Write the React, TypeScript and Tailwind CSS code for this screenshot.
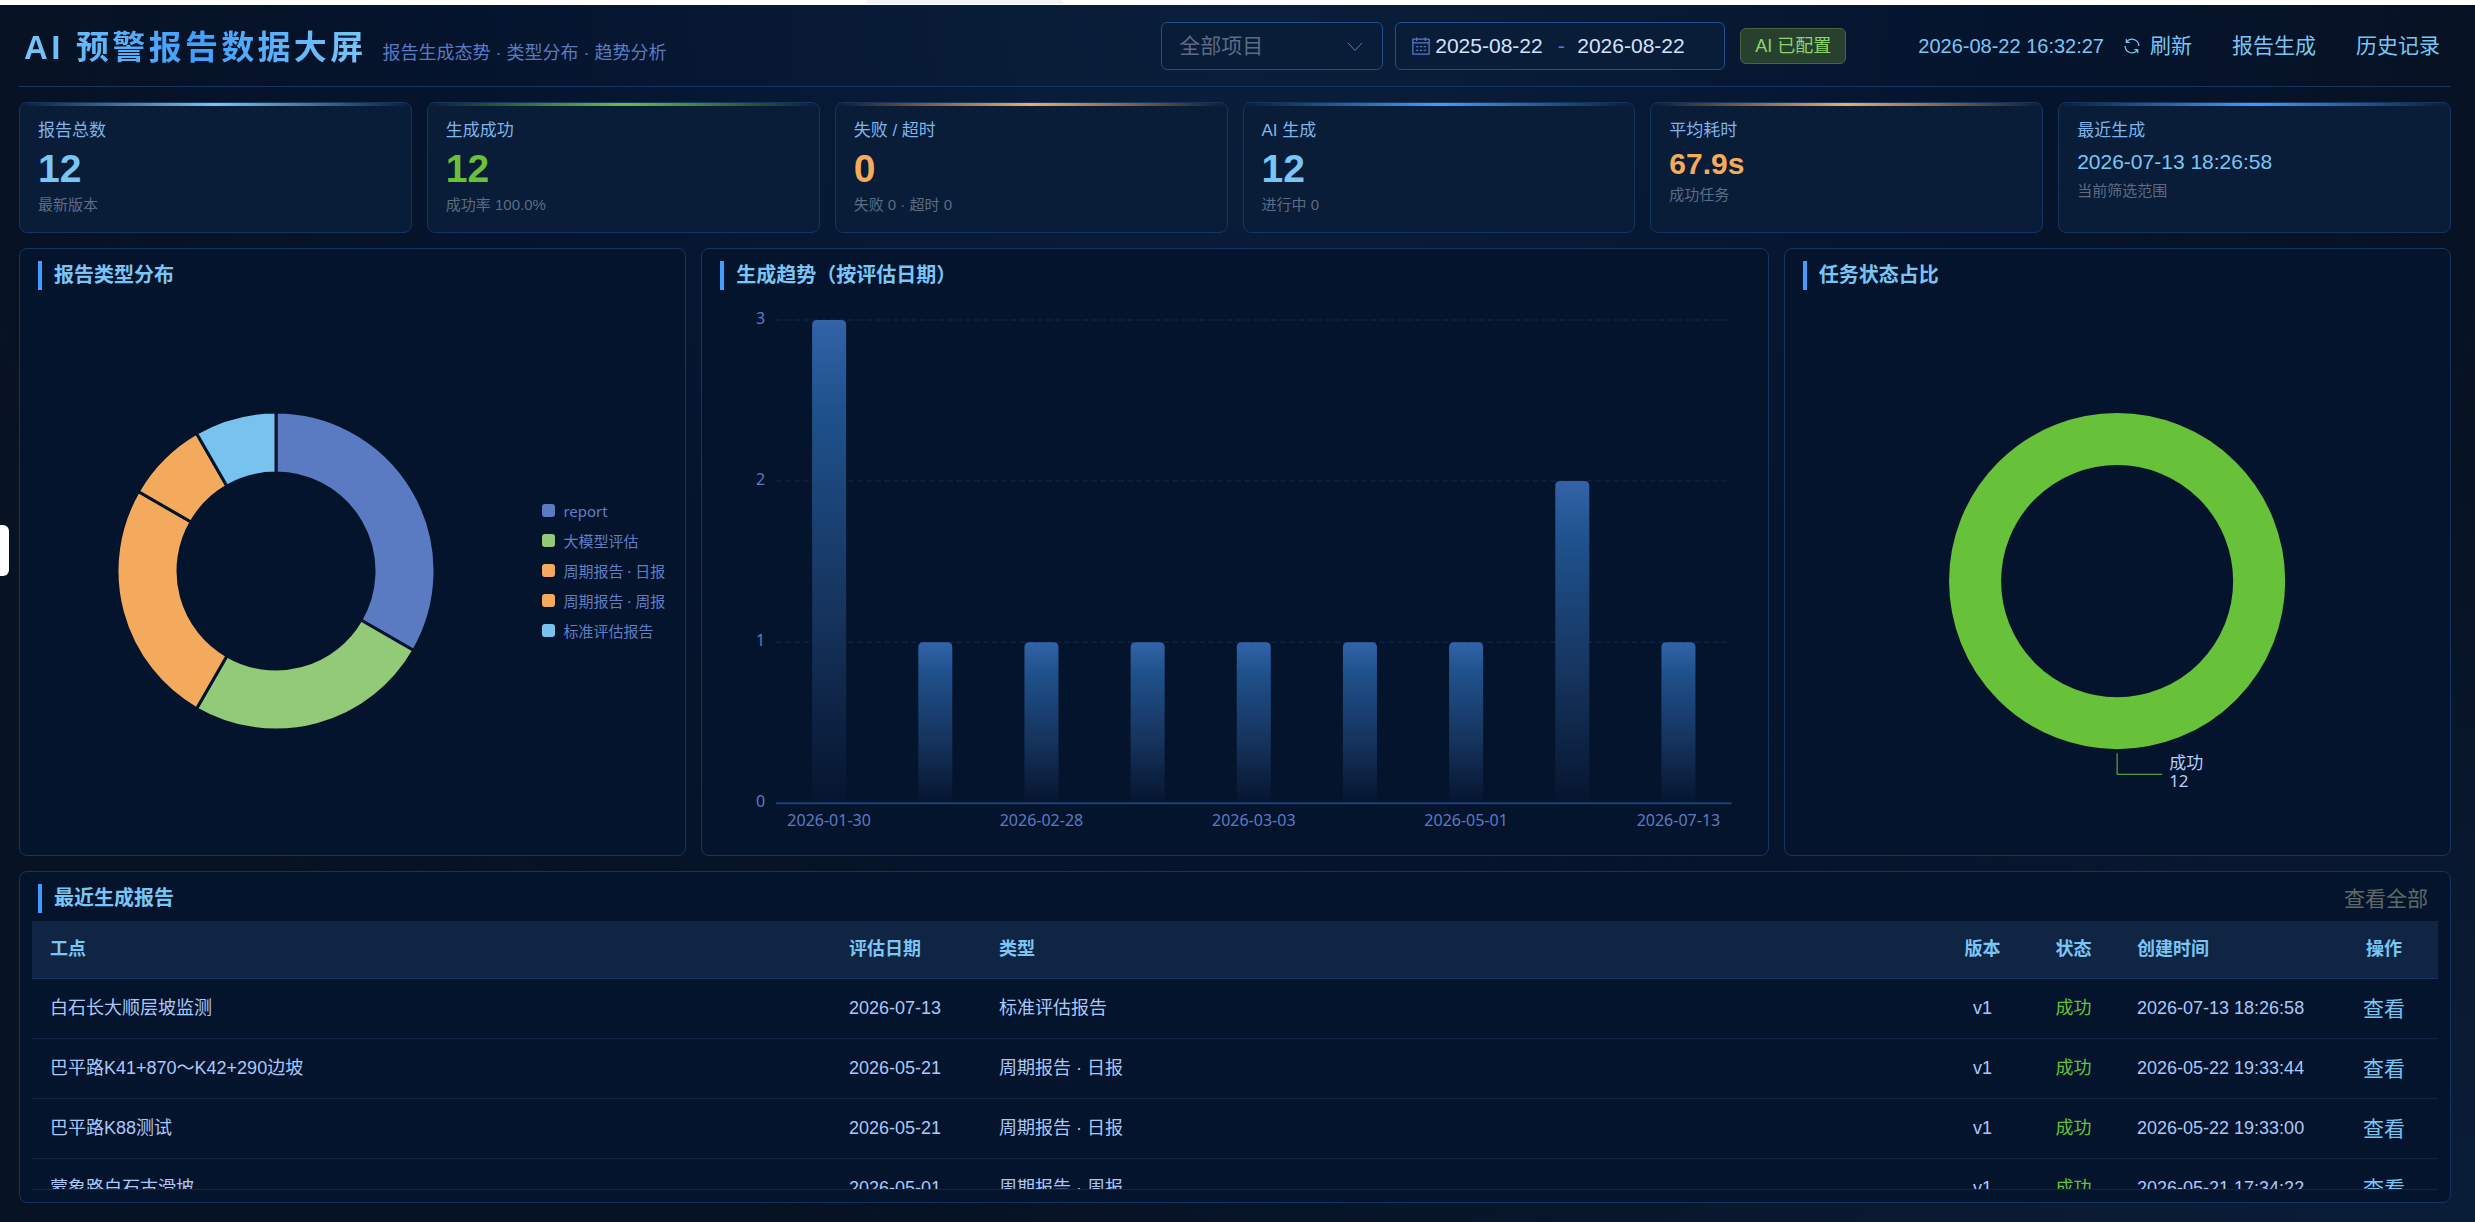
import { useState, type ReactNode } from 'react';
import clsx from 'clsx';

const stats = [
  { label: '报告总数', value: '12', sub: '最新版本', size: 'lg', color: 'text-[#79c6f5]', bar: 'via-[#79c6f5]' },
  { label: '生成成功', value: '12', sub: '成功率 100.0%', size: 'lg', color: 'text-[#67c23a]', bar: 'via-[#67c23a]' },
  { label: '失败 / 超时', value: '0', sub: '失败 0 · 超时 0', size: 'lg', color: 'text-[#f5ab5a]', bar: 'via-[#f5ab5a]' },
  { label: 'AI 生成', value: '12', sub: '进行中 0', size: 'lg', color: 'text-[#79c6f5]', bar: 'via-[#409eff]' },
  { label: '平均耗时', value: '67.9s', sub: '成功任务', size: 'md', color: 'text-[#f5ab5a]', bar: 'via-[#f5ab5a]' },
  { label: '最近生成', value: '2026-07-13 18:26:58', sub: '当前筛选范围', size: 'sm', color: 'text-[#79c6f5]', bar: 'via-[#409eff]' },
];

const reportTypes = [
  { name: 'report', value: 4, color: '#5a7bc2' },
  { name: '大模型评估', value: 3, color: '#92ca78' },
  { name: '周期报告 · 日报', value: 3, color: '#f3aa5c' },
  { name: '周期报告 · 周报', value: 1, color: '#f3aa5c' },
  { name: '标准评估报告', value: 1, color: '#78c3ee' },
];

const trend = [
  { date: '2026-01-30', count: 3 },
  { date: '', count: 1 },
  { date: '2026-02-28', count: 1 },
  { date: '', count: 1 },
  { date: '2026-03-03', count: 1 },
  { date: '', count: 1 },
  { date: '2026-05-01', count: 1 },
  { date: '', count: 2 },
  { date: '2026-07-13', count: 1 },
];

const reports = [
  { site: '白石长大顺层坡监测', date: '2026-07-13', type: '标准评估报告', created: '2026-07-13 18:26:58' },
  { site: '巴平路K41+870～K42+290边坡', date: '2026-05-21', type: '周期报告 · 日报', created: '2026-05-22 19:33:44' },
  { site: '巴平路K88测试', date: '2026-05-21', type: '周期报告 · 日报', created: '2026-05-22 19:33:00' },
  { site: '蒙象路白石古滑坡', date: '2026-05-01', type: '周期报告 · 周报', created: '2026-05-21 17:34:22' },
];

function CalendarIcon() {
  return (
    <svg viewBox="0 0 1024 1024" className="size-5 shrink-0 fill-[#5a7bc2]" aria-hidden="true">
      <path d="M128 384v512h768V192H768v32a32 32 0 1 1-64 0v-32H320v32a32 32 0 0 1-64 0v-32H128v128h768v64zm192-256h384V96a32 32 0 1 1 64 0v32h160a32 32 0 0 1 32 32v768a32 32 0 0 1-32 32H96a32 32 0 0 1-32-32V160a32 32 0 0 1 32-32h160V96a32 32 0 0 1 64 0zm-32 384h64a32 32 0 0 1 0 64h-64a32 32 0 0 1 0-64m0 192h64a32 32 0 1 1 0 64h-64a32 32 0 1 1 0-64m192-192h64a32 32 0 0 1 0 64h-64a32 32 0 0 1 0-64m0 192h64a32 32 0 1 1 0 64h-64a32 32 0 1 1 0-64m192-192h64a32 32 0 1 1 0 64h-64a32 32 0 1 1 0-64m0 192h64a32 32 0 1 1 0 64h-64a32 32 0 1 1 0-64" />
    </svg>
  );
}

function RefreshIcon() {
  return (
    <svg viewBox="0 0 1024 1024" className="size-5 shrink-0 fill-current" aria-hidden="true">
      <path d="M771.776 794.88A384 384 0 0 1 128 512h64a320 320 0 0 0 555.712 216.448H654.72a32 32 0 1 1 0-64h149.056a32 32 0 0 1 32 32v148.928a32 32 0 1 1-64 0v-50.56zM276.288 295.616h92.992a32 32 0 0 1 0 64H220.16a32 32 0 0 1-32-32V178.56a32 32 0 0 1 64 0v50.56A384 384 0 0 1 896.128 512h-64a320 320 0 0 0-555.776-216.384z" />
    </svg>
  );
}

function Panel({ title, action, children }: { title: string; action?: ReactNode; children: ReactNode }) {
  return (
    <section className="flex min-w-0 flex-col rounded-lg border border-[#153461] bg-[#05142d]">
      <div className="flex items-center justify-between px-[18px] pt-3">
        <h2 className="border-l-4 border-[#409eff] pl-3 text-[20px] leading-[29px] font-bold text-[#79c6f5]">{title}</h2>
        {action}
      </div>
      {children}
    </section>
  );
}

function slicePath(start: number, end: number, outer: number, inner: number) {
  const point = (turn: number, r: number) => {
    const angle = turn * 2 * Math.PI;
    return `${r * Math.sin(angle)} ${-r * Math.cos(angle)}`;
  };
  const large = end - start > 0.5 ? 1 : 0;
  return `M${point(start, outer)}A${outer} ${outer} 0 ${large} 1 ${point(end, outer)}L${point(end, inner)}A${inner} ${inner} 0 ${large} 0 ${point(start, inner)}Z`;
}

function TypeChart() {
  const total = reportTypes.reduce((sum, item) => sum + item.value, 0);
  let sum = 0;
  const slices = reportTypes.map((item) => {
    const start = sum / total;
    sum += item.value;
    return { ...item, d: slicePath(start, sum / total, 159, 98) };
  });

  return (
    <div className="flex flex-1 items-center justify-between pr-5 pb-1 pl-24">
      <svg viewBox="-160 -160 320 320" className="w-80 min-w-0" role="img" aria-label="报告类型分布">
        {slices.map((slice) => (
          <path key={slice.name} d={slice.d} fill={slice.color} stroke="#05142d" strokeWidth="3" />
        ))}
      </svg>
      <ul className="flex shrink-0 flex-col gap-3.5 font-['Noto_Sans','Noto_Sans_CJK_SC',sans-serif] text-[15px] leading-4 text-[#5f7fc4]">
        {reportTypes.map((item) => (
          <li key={item.name} className="flex items-center gap-2">
            <span className="size-[13px] rounded-[3px]" style={{ backgroundColor: item.color }} />
            {item.name}
          </li>
        ))}
      </ul>
    </div>
  );
}

function TrendChart() {
  const left = 74;
  const right = 1029;
  const base = 513;
  const step = 161;
  const band = (right - left) / trend.length;

  return (
    <svg
      viewBox="0 0 1065 565"
      className="w-full font-['Noto_Sans','Noto_Sans_CJK_SC',sans-serif] text-base"
      role="img"
      aria-label="生成趋势"
    >
      <defs>
        <linearGradient id="bar" x1="0" y1="0" x2="0" y2="1">
          <stop offset="0" stopColor="#3363a8" />
          <stop offset="0.18" stopColor="#1f528d" />
          <stop offset="0.6" stopColor="#16345e" />
          <stop offset="1" stopColor="#06152f" />
        </linearGradient>
      </defs>
      {[1, 2, 3].map((n) => (
        <line key={n} x1={left} x2={right} y1={base - n * step} y2={base - n * step} stroke="#132a4e" strokeDasharray="6 3" />
      ))}
      {[0, 1, 2, 3].map((n) => (
        <text key={n} x="63" y={base - n * step + 4} textAnchor="end" fill="#5a7bc2">
          {n}
        </text>
      ))}
      {trend.map((item, i) => {
        const center = left + band * (i + 0.5);
        const top = base - item.count * step;
        return (
          <g key={i}>
            <path d={`M${center - 17} ${base}V${top + 5}q0 -5 5 -5h24q5 0 5 5V${base}Z`} fill="url(#bar)" />
            <text x={center} y="536" textAnchor="middle" fill="#5a7bc2">
              {item.date}
            </text>
          </g>
        );
      })}
      <line x1={left} x2={right} y1={base} y2={base} stroke="#1b4176" strokeWidth="2" />
    </svg>
  );
}

function StatusChart() {
  return (
    <svg
      viewBox="0 0 665 565"
      className="w-full font-['Noto_Sans','Noto_Sans_CJK_SC',sans-serif] text-[17px]"
      role="img"
      aria-label="任务状态占比"
    >
      <circle cx="332" cy="291" r="142" fill="none" stroke="#67c23a" strokeWidth="52" />
      <path d="M332 463v21h45" fill="none" stroke="#67c23a" />
      <text x="384" y="479" fill="#b4cffa">成功</text>
      <text x="384" y="497" fill="#b4cffa">12</text>
    </svg>
  );
}

function StatCard({ label, value, sub, size, color, bar }: (typeof stats)[number]) {
  return (
    <div className="overflow-hidden rounded-lg border border-[#153461] bg-[#091c38]">
      <div className={clsx('h-[3px] bg-linear-to-r from-transparent to-transparent', bar)} />
      <div className="px-[18px] pt-[13px] pb-4">
        <p className="text-[17px] leading-6 text-[#7fb4ea]">{label}</p>
        <p
          className={clsx('mt-[3px]', color, {
            'text-[39px] leading-[46px] font-bold': size === 'lg',
            'text-[30px] leading-9 font-bold': size === 'md',
            'text-[21px] leading-8': size === 'sm',
          })}
        >
          {value}
        </p>
        <p className="mt-0.5 text-[15px] leading-[22px] text-[#5b6c84]">{sub}</p>
      </div>
    </div>
  );
}

export default function App() {
  const [project, setProject] = useState('');
  const [from, setFrom] = useState('2025-08-22');
  const [to, setTo] = useState('2026-08-22');

  return (
    <div className="relative flex min-h-screen flex-col overflow-hidden bg-[#071222] bg-[radial-gradient(ellipse_at_50%_0%,#0a1f3c_0%,#05142d_45%,transparent_75%),radial-gradient(ellipse_at_100%_100%,#0a1d38_0%,transparent_45%)] font-['Liberation_Sans','Noto_Sans_CJK_SC',sans-serif]">
      <div className="flex h-[5px] bg-white">
        <div className="ml-[35%] h-1 w-[8%] rounded-t-sm bg-[#eef3fc]" />
      </div>

      <main className="flex flex-1 flex-col gap-[15px] pr-6 pb-5 pl-[19px]">
        <header className="flex h-[82px] items-center border-b border-[#153461] pr-[11px] pl-[5px]">
          <div className="flex items-baseline gap-4 pt-1 whitespace-nowrap">
            <h1 className="bg-linear-to-r from-[#79c6f5] via-[#409eff] to-[#79c6f5] bg-clip-text text-[33px] leading-[50px] font-bold tracking-widest text-transparent">
              AI 预警报告数据大屏
            </h1>
            <p className="text-[18px] text-[#5a7bc2]">报告生成态势 · 类型分布 · 趋势分析</p>
          </div>

          <div className="ml-auto flex items-center gap-3 whitespace-nowrap">
            <div className="relative">
              <select
                aria-label="项目"
                value={project}
                onChange={(event) => setProject(event.target.value)}
                className="h-12 w-[222px] appearance-none rounded-md border border-[#1f4f8c] bg-[#091c38] px-[17px] text-[21px] text-[#5d6b85] outline-none"
              >
                <option value="">全部项目</option>
              </select>
              <svg viewBox="0 0 16 10" className="pointer-events-none absolute top-5 right-5 h-2.5 w-4 fill-none stroke-[#5a7bc2]" aria-hidden="true">
                <path d="M1 1l7 7.500l7-7.500" />
              </svg>
            </div>
            <div className="flex h-12 w-[330px] items-center rounded-md border border-[#1f4f8c] bg-[#091c38] px-[15px] text-[21px] text-[#d3e2fb]">
              <CalendarIcon />
              <input
                aria-label="开始日期"
                value={from}
                onChange={(event) => setFrom(event.target.value)}
                className="ml-1 w-[110px] bg-transparent outline-none"
              />
              <span className="w-8 text-center text-[#5a7bc2]">-</span>
              <input
                aria-label="结束日期"
                value={to}
                onChange={(event) => setTo(event.target.value)}
                className="w-[110px] bg-transparent outline-none"
              />
            </div>
            <span className="ml-[3px] rounded-md border border-[#4b6440] bg-[#28412f] px-3.5 text-[18px] leading-[34px] text-[#8fd36c]">AI 已配置</span>
          </div>

          <nav className="ml-[72px] flex items-center gap-10 text-[21px] whitespace-nowrap text-[#79c6f5]">
            <div className="flex items-center gap-[18px]">
              <time className="text-[20px]">2026-08-22 16:32:27</time>
              <button type="button" className="flex items-center gap-2">
                <RefreshIcon />
                刷新
              </button>
            </div>
            <button type="button">报告生成</button>
            <button type="button">历史记录</button>
          </nav>
        </header>

        <div className="grid grid-cols-6 gap-[15px]">
          {stats.map((stat) => (
            <StatCard key={stat.label} {...stat} />
          ))}
        </div>

        <div className="grid grid-cols-[1fr_1.6fr_1fr] gap-[15px]">
          <Panel title="报告类型分布">
            <TypeChart />
          </Panel>
          <Panel title="生成趋势（按评估日期）">
            <TrendChart />
          </Panel>
          <Panel title="任务状态占比">
            <StatusChart />
          </Panel>
        </div>

        <Panel
          title="最近生成报告"
          action={
            <button type="button" className="pr-1 text-[21px] leading-[29px] text-[#5f6a66]">
              查看全部
            </button>
          }
        >
          <div className="mx-3 mt-2 mb-3 max-h-[269px] overflow-hidden border-b border-[#0e2547]">
            <table className="w-full table-fixed border-separate border-spacing-0 text-left text-[18px] text-[#a9c8f8]">
              <thead>
                <tr className="h-[58px] text-[#79c6f5] *:border-b *:border-[#153461] *:bg-[#102543] *:px-[18px] *:font-bold">
                  <th className="w-[799px]">工点</th>
                  <th className="w-[150px]">评估日期</th>
                  <th>类型</th>
                  <th className="w-[91px] text-center">版本</th>
                  <th className="w-[91px] text-center">状态</th>
                  <th className="w-[211px]">创建时间</th>
                  <th className="w-[108px] text-center">操作</th>
                </tr>
              </thead>
              <tbody>
                {reports.map((report) => (
                  <tr key={report.created} className="h-[60px] *:border-b *:border-[#0e2547] *:px-[18px] *:whitespace-nowrap">
                    <td>{report.site}</td>
                    <td>{report.date}</td>
                    <td>{report.type}</td>
                    <td className="text-center">v1</td>
                    <td className="text-center text-[#67c23a]">成功</td>
                    <td>{report.created}</td>
                    <td className="text-center">
                      <button type="button" className="text-[21px] text-[#79c6f5]">
                        查看
                      </button>
                    </td>
                  </tr>
                ))}
              </tbody>
            </table>
          </div>
        </Panel>
      </main>

      {/* sidebar handle */}
      <div className="absolute top-[525px] left-0 h-[51px] w-[9px] rounded-r-md bg-white" />
    </div>
  );
}
